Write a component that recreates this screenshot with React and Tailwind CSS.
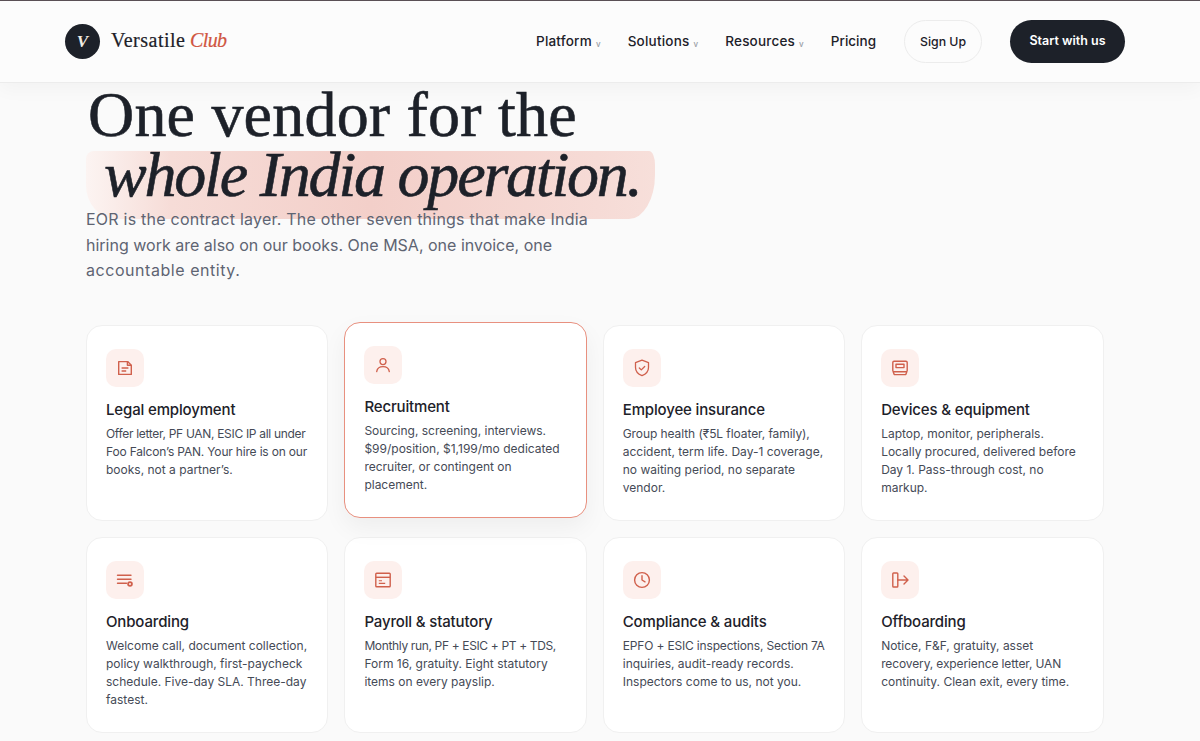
import React from "react";

const FileIcon = () => (
  <svg width="20" height="20" viewBox="0 0 20 20" fill="none" stroke="currentColor" strokeWidth="1.4" strokeLinejoin="round">
    <path d="M3.7 3.6h9l3.6 3.6v9.2H3.7z" />
    <path d="M12.4 3.6v3.6h3.9" />
    <path d="M6.6 10h6.8M6.6 13h4.6" />
  </svg>
);
const UserIcon = () => (
  <svg width="20" height="20" viewBox="0 0 20 20" fill="none" stroke="currentColor" strokeWidth="1.3" strokeLinecap="round">
    <circle cx="10" cy="6.600" r="3" />
    <path d="M3.700 16.600c.5-3.400 3-5 6.300-5s5.800 1.600 6.300 5" />
  </svg>
);
const ShieldIcon = () => (
  <svg width="20" height="20" viewBox="0 0 20 20" fill="none" stroke="currentColor" strokeWidth="1.3" strokeLinecap="round" strokeLinejoin="round">
    <path d="M10 2.200l6.500 2.400v5c0 3.800-2.600 6.600-6.500 8.100-3.900-1.500-6.500-4.300-6.500-8.100v-5z" />
    <path d="M7.300 10l2 1.900 3.400-3.400" />
  </svg>
);
const DeviceIcon = () => (
  <svg width="20" height="20" viewBox="0 0 20 20" fill="none" stroke="currentColor" strokeWidth="1.4" strokeLinejoin="round">
    <rect x="2.800" y="3.300" width="14.400" height="10.400" rx="1.300" />
    <rect x="6" y="6.200" width="8" height="3.400" />
    <path d="M3.200 13.700l1 2.900h11.600l1-2.900" />
  </svg>
);
const ListIcon = () => (
  <svg width="20" height="20" viewBox="0 0 20 20" fill="none" stroke="currentColor" strokeWidth="1.4" strokeLinecap="round">
    <path d="M2.500 5.300h13.500M2.500 9.300h13.500M2.500 13.300h9" />
    <circle cx="15" cy="14" r="2.800" fill="currentColor" stroke="none" />
    <circle cx="15" cy="14" r="1" fill="#fdf0ed" stroke="none" />
  </svg>
);
const PayrollIcon = () => (
  <svg width="20" height="20" viewBox="0 0 20 20" fill="none" stroke="currentColor" strokeWidth="1.4">
    <rect x="2.800" y="3.300" width="14.400" height="13.400" rx="0.800" />
    <path d="M2.800 7.300h14.400" />
    <path d="M5.800 10.800h3.200M5.800 13.400h6.400" strokeWidth="1.100" />
  </svg>
);
const ClockIcon = () => (
  <svg width="20" height="20" viewBox="0 0 20 20" fill="none" stroke="currentColor" strokeWidth="1.4" strokeLinecap="round" strokeLinejoin="round">
    <circle cx="10" cy="10" r="7.400" />
    <path d="M10 5.800V10l3 1.800" />
  </svg>
);
const ExitIcon = () => (
  <svg width="20" height="20" viewBox="0 0 20 20" fill="none" stroke="currentColor" strokeWidth="1.4" strokeLinecap="round" strokeLinejoin="round">
    <rect x="2.800" y="3" width="5" height="14" rx="0.800" />
    <path d="M7.800 10h10M14 6l4 4-4 4" />
  </svg>
);

// capitals run narrower in the reference, so the cap-heavy lines get tightened
const tightLines = {
  "Offer letter, PF UAN, ESIC IP all under": "tracking-[-0.31px]",
  "Foo Falcon’s PAN. Your hire is on our": "tracking-[-0.18px]",
  "Monthly run, PF + ESIC + PT + TDS,": "tracking-[-0.35px]",
  "EPFO + ESIC inspections, Section 7A": "tracking-[-0.17px]",
  "recovery, experience letter, UAN": "tracking-[-0.12px]",
  "Group health (₹5L floater, family),": "tracking-[-0.08px]",
};

const services = [
  { title: "Legal employment", icon: FileIcon, lines: ["Offer letter, PF UAN, ESIC IP all under", "Foo Falcon’s PAN. Your hire is on our", "books, not a partner’s."] },
  { title: "Recruitment", icon: UserIcon, active: true, lines: ["Sourcing, screening, interviews.", "$99/position, $1,199/mo dedicated", "recruiter, or contingent on", "placement."] },
  { title: "Employee insurance", icon: ShieldIcon, lines: ["Group health (₹5L floater, family),", "accident, term life. Day-1 coverage,", "no waiting period, no separate", "vendor."] },
  { title: "Devices & equipment", icon: DeviceIcon, lines: ["Laptop, monitor, peripherals.", "Locally procured, delivered before", "Day 1. Pass-through cost, no", "markup."] },
  { title: "Onboarding", icon: ListIcon, lines: ["Welcome call, document collection,", "policy walkthrough, first-paycheck", "schedule. Five-day SLA. Three-day", "fastest."] },
  { title: "Payroll & statutory", icon: PayrollIcon, lines: ["Monthly run, PF + ESIC + PT + TDS,", "Form 16, gratuity. Eight statutory", "items on every payslip."] },
  { title: "Compliance & audits", icon: ClockIcon, lines: ["EPFO + ESIC inspections, Section 7A", "inquiries, audit-ready records.", "Inspectors come to us, not you."] },
  { title: "Offboarding", icon: ExitIcon, lines: ["Notice, F&F, gratuity, asset", "recovery, experience letter, UAN", "continuity. Clean exit, every time."] },
];

const NavItem = ({ label, caret = true }) => (
  <a className={`flex items-center text-[13.5px] font-medium text-[#1d2129] ${caret ? "tracking-[0.2px]" : ""}`}>
    {label}
    {caret && <span className="ml-1 mt-1 text-[8px] leading-none text-[#9a9ea6]">v</span>}
  </a>
);

const Card = ({ service }) => {
  const Icon = service.icon;
  return (
    <div
      className={`h-[196px] rounded-2xl border bg-white px-[19px] pt-[23px] ${
        service.active
          ? "-translate-y-[3px] border-[#e8907f] shadow-[0_10px_24px_rgba(0,0,0,0.05)]"
          : "border-[#f0f0f0]"
      }`}
    >
      <div className="flex h-[38px] w-[38px] items-center justify-center rounded-[10px] bg-[#fdf0ed] text-[#d0604c]">
        <Icon />
      </div>
      <h3 className="mt-[13px] text-[15px] leading-[20px] font-medium tracking-[-0.15px] text-[#1d2129]">{service.title}</h3>
      <p className="mt-[5px] text-[12px] leading-[18.2px] text-[#454a56]">
        {service.lines.map((line) => (
          <span key={line} className={`block whitespace-nowrap ${tightLines[line] || ""}`}>
            {line}
          </span>
        ))}
      </p>
    </div>
  );
};

export default function App() {
  return (
    <div className="h-[741px] overflow-hidden bg-[#fafafa] font-['Inter',sans-serif]">
      <header className="relative z-10 flex h-[83px] items-center justify-between border-t border-b border-t-[#5a5055] border-b-[#ececec] bg-[#fcfcfc] pr-[75px] pl-[65px] shadow-[0_6px_18px_rgba(0,0,0,0.035)]">
        <div className="flex items-center gap-[11px]">
          <div className="flex h-[35px] w-[35px] items-center justify-center rounded-full bg-[#1d2129] font-['Liberation_Serif',serif] text-[17px] font-bold text-[#f2ede4] italic">
            V
          </div>
          <span className="pb-[3px] font-['Liberation_Serif',serif] text-[20px] tracking-[0.5px] text-[#1d2129] [-webkit-text-stroke:0.2px_#1d2129]">
            Versatile <em className="-ml-[1px] tracking-[-0.6px] text-[#d0553f] [-webkit-text-stroke:0.2px_#d0553f]">Club</em>
          </span>
        </div>
        <nav className="flex items-center">
          <div className="flex items-center gap-[27px]">
            <NavItem label="Platform" />
            <NavItem label="Solutions" />
            <NavItem label="Resources" />
            <NavItem label="Pricing" caret={false} />
          </div>
          <a className="ml-[28px] flex h-[43px] w-[78px] items-center justify-center rounded-full border border-[#ececec] pt-[1px] text-[12.3px] font-medium text-[#1d2129]">
            Sign Up
          </a>
          <a className="ml-[28px] flex h-[43px] w-[115px] items-center justify-center rounded-full bg-[#1d2129] text-[12.5px] font-semibold text-white">
            Start with us
          </a>
        </nav>
      </header>

      <main className="px-[86px]">
        <h1 className="mt-[2px] font-['Liberation_Serif',serif] text-[64px] leading-[60px] font-normal text-[#1d2129] [-webkit-text-stroke:0.6px_#1d2129]">
          <span className="block pl-[2px] tracking-[0.2px] whitespace-nowrap">One vendor for the</span>
          <span className="relative block pl-[18px] tracking-[-2.2px] whitespace-nowrap italic">
            <span className="absolute top-[6px] left-0 h-[68px] w-[569px] rounded-[8px_6px_26px_30px/8px_14px_44px_34px] bg-[linear-gradient(90deg,#fcf4f2_0%,#f6dcd7_15%,#f3cfc9_50%,#f6dbd6_90%,#f7dfda_100%)]" />
            <span className="relative">whole India operation.</span>
          </span>
        </h1>
        <p className="relative mt-[2px] text-[16px] leading-[25.6px] text-[#5e6472]">
          <span className="block tracking-[0.23px]">EOR is the contract layer. The other seven things that make India</span>
          <span className="block">hiring work are also on our books. One MSA, one invoice, one</span>
          <span className="block tracking-[0.55px]">accountable entity.</span>
        </p>

        <div className="mt-[41px] grid w-[1017.5px] grid-cols-4 gap-x-[16px] gap-y-[16px]">
          {services.map((service) => (
            <Card key={service.title} service={service} />
          ))}
        </div>
      </main>
    </div>
  );
}
